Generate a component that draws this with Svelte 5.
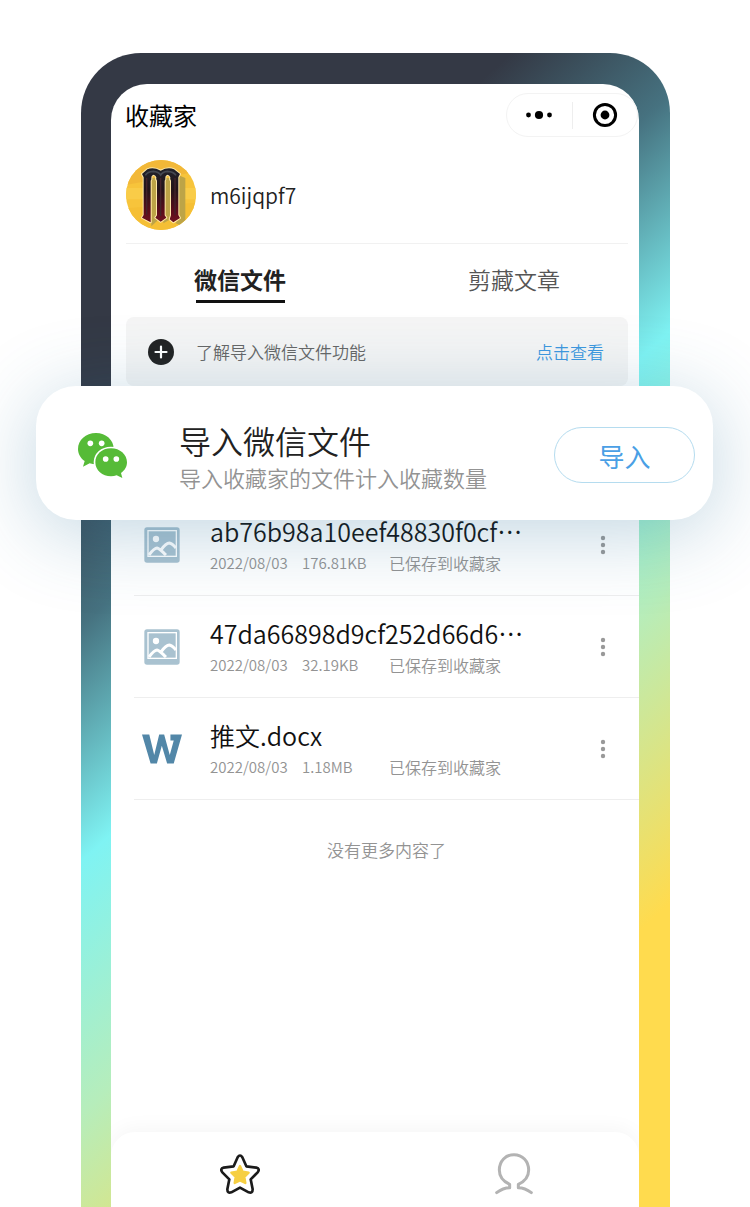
<script>
  let activeTab = $state('files');

  const tabs = [
    { id: 'files', label: '微信文件' },
    { id: 'articles', label: '剪藏文章' }
  ];

  const files = [
    { type: 'image', name: 'ab76b98a10eef48830f0cf…', date: '2022/08/03', size: '176.81KB', status: '已保存到收藏家' },
    { type: 'image', name: '47da66898d9cf252d66d6…', date: '2022/08/03', size: '32.19KB', status: '已保存到收藏家' },
    { type: 'doc', name: '推文.docx', date: '2022/08/03', size: '1.18MB', status: '已保存到收藏家' }
  ];
</script>

<div class="page" lang="zh-CN">
  <div class="phone">
    <main class="screen">
      <header class="header">
        <h1>收藏家</h1>
        <div class="capsule">
          <button aria-label="更多">
            <svg width="26" height="10" viewBox="0 0 26 10">
              <circle cx="2.5" cy="5" r="2.4" />
              <circle cx="13" cy="5" r="4.1" />
              <circle cx="23.5" cy="5" r="2.4" />
            </svg>
          </button>
          <span class="divider"></span>
          <button aria-label="关闭">
            <svg width="26" height="26" viewBox="0 0 26 26">
              <circle cx="13" cy="13" r="10.6" fill="none" stroke="#000" stroke-width="3" />
              <circle cx="13" cy="13" r="4.4" />
            </svg>
          </button>
        </div>
      </header>

      <section class="profile">
        <svg class="avatar" width="70" height="70" viewBox="0 0 210 210" aria-hidden="true">
          <defs>
            <linearGradient id="ink" x1="0" y1="0" x2="0" y2="1">
              <stop offset="0" stop-color="#20222b" />
              <stop offset="0.4" stop-color="#241419" />
              <stop offset="0.8" stop-color="#5c0d1b" />
              <stop offset="1" stop-color="#6e1420" />
            </linearGradient>
            <clipPath id="round"><circle cx="105" cy="105" r="105" /></clipPath>
            <path
              id="emblem"
              d="M48 42L64 28Q82 20 104 32Q126 20 144 28L162 42L157 52V165L162 174L142 187L131 178L135 166V62Q131 60 133 52Q130 44 124 44Q117 46 118 54Q119 59 116 62V166L121 173L104 185L88 173L93 166V62Q89 60 91 52Q88 44 82 44Q75 46 76 54Q77 59 74 62V187L48 173L53 165V52Z"
            />
          </defs>
          <g clip-path="url(#round)">
            <rect width="210" height="210" fill="#f7c43b" />
            <path d="M0 0H210V35L0 75Z" fill="#f2b838" />
            <path d="M0 84H210V118H0Z" fill="#f9cc48" />
            <path d="M0 145L210 128V210H0Z" fill="#f5bf35" />
            <path d="M76 54H94V182L76 199ZM116 54H136V176L112 190ZM158 46L178 54V186L168 199L148 189L158 176Z" fill="#bda447" />
            <use href="#emblem" fill="url(#ink)" stroke="#ffe9a8" stroke-width="6" stroke-linejoin="round" />
            <use href="#emblem" fill="url(#ink)" />
            <path d="M58 46Q64 35 82 34Q98 35 104 45Q110 35 124 34Q143 35 150 46" fill="none" stroke="#454852" stroke-width="5" />
            <path d="M62 54V164M104 54V168M147 54V164" stroke="#43232b" stroke-width="4" />
          </g>
        </svg>
        <span class="username">m6ijqpf7</span>
      </section>

      <div class="tabs" role="tablist">
        {#each tabs as tab}
          <button
            role="tab"
            class="tab"
            class:active={activeTab === tab.id}
            aria-selected={activeTab === tab.id}
            onclick={() => (activeTab = tab.id)}
          >
            {tab.label}
          </button>
        {/each}
      </div>

      <section class="notice">
        <svg width="26" height="26" viewBox="0 0 26 26" aria-hidden="true">
          <circle cx="13" cy="13" r="13" fill="#222" />
          <path d="M13 7.5V18.5M7.5 13H18.5" stroke="#fff" stroke-width="2.2" stroke-linecap="round" />
        </svg>
        <span>了解导入微信文件功能</span>
        <a href="#guide">点击查看</a>
      </section>

      <section class="import-card">
        <svg class="wechat" width="49" height="45" viewBox="0 0 147 135" aria-hidden="true">
          <path
            d="M54 0C23 0 0 21 0 48C0 63 8 76 20 84L15 101L35 91C41 93 48 94 54 94C85 94 107 74 107 47C107 21 84 0 54 0Z"
            fill="#56bb37"
          />
          <path
            d="M99 46C71 46 52 65 52 88C52 112 73 130 99 130C105 130 111 129 116 127L133 135L129 120C140 113 147 101 147 88C147 65 126 46 99 46Z"
            fill="#56bb37"
            stroke="#fff"
            stroke-width="10"
            paint-order="stroke"
          />
          <g fill="#fff">
            <circle cx="37" cy="31" r="8.5" />
            <circle cx="71" cy="31" r="8.5" />
            <circle cx="83" cy="78" r="8.5" />
            <circle cx="115" cy="78" r="8.5" />
          </g>
        </svg>
        <div class="import-text">
          <h2>导入微信文件</h2>
          <p>导入收藏家的文件计入收藏数量</p>
        </div>
        <button class="import-button">导入</button>
      </section>

      <section class="list">
        {#each files as file}
          <article class="file">
            <div class="file-icon">
              {#if file.type === 'image'}
                <svg width="36" height="36" viewBox="0 0 108 108" aria-hidden="true">
                  <rect x="1" y="1" width="106" height="106" rx="8" fill="#a9c2d0" />
                  <rect x="12" y="11" width="85" height="77" fill="none" stroke="#fff" stroke-width="4" />
                  <circle cx="36" cy="36" r="9.5" fill="#fff" />
                  <path d="M15 84C24 72 31 63 39 63C47 64 55 74 66 84M50 70C60 56 68 48 76 48C84 49 90 56 96 63" fill="none" stroke="#fff" stroke-width="9" />
                </svg>
              {:else}
                <svg width="40" height="30" viewBox="0 0 121 88" aria-hidden="true">
                  <path d="M0 0H22L37 62L52 0H67L84 62L96 18H86V0H121L96 88H76L60 34L45 88H26Z" fill="#5287a8" />
                </svg>
              {/if}
            </div>
            <div class="file-info">
              <h3>{file.name}</h3>
              <div class="meta">
                <span>{file.date}</span>
                <span>{file.size}</span>
                <span class="status">{file.status}</span>
              </div>
            </div>
            <button class="more" aria-label="更多操作">
              <svg width="6" height="20" viewBox="0 0 6 20" fill="#999">
                <circle cx="3" cy="3" r="2.2" />
                <circle cx="3" cy="10" r="2.2" />
                <circle cx="3" cy="17" r="2.2" />
              </svg>
            </button>
          </article>
        {/each}
        <p class="end">没有更多内容了</p>
      </section>

      <nav class="navbar">
        <button aria-label="收藏">
          <svg width="40" height="40" viewBox="0 0 120 120">
            <path
              d="M53 10Q60 -1 67 10L79 37L109 41Q121 44 113 55L92 76L98 106Q98 119 86 115L60 101L34 115Q22 119 22 106L28 76L7 55Q-1 44 11 41L41 37Z"
              fill="#fff"
              stroke="#1b1b1b"
              stroke-width="8"
              stroke-linejoin="round"
            />
            <path
              d="M60 36L68 53L86 56L73 69L76 87L60 79L44 87L47 69L34 56L52 53Z"
              fill="#f6cf42"
              stroke="#f6cf42"
              stroke-width="7"
              stroke-linejoin="round"
            />
          </svg>
        </button>
        <button aria-label="我的">
          <svg width="38" height="42" viewBox="0 0 114 126">
            <path
              d="M5 119Q24 104 44 104V94C24 85 13 69 13 51C13 24 32 5 57 5S101 24 101 51C101 69 90 85 70 94V104Q90 104 109 119"
              fill="none"
              stroke="#b3b3b3"
              stroke-width="9"
              stroke-linecap="round"
              stroke-linejoin="round"
            />
          </svg>
        </button>
      </nav>
    </main>
  </div>
</div>

<style>
  :global(body) {
    margin: 0;
    background: #fff;
  }

  .page {
    box-sizing: border-box;
    display: flex;
    min-height: 100vh;
    padding: 53px 80px 0 81px;
    overflow: hidden;
    font-family: "Noto Sans CJK SC", "Noto Sans", sans-serif;
    font-weight: 350;
    color: #222;
  }

  h1, h2, h3, p {
    margin: 0;
    font-weight: inherit;
  }

  button {
    padding: 0;
    border: none;
    background: none;
    font-family: inherit;
    font-weight: inherit;
    cursor: pointer;
  }

  svg {
    display: block;
    flex-shrink: 0;
  }

  .phone {
    flex: 1;
    min-width: 0;
    display: flex;
    padding: 31px 31px 0 30px;
    border-radius: 60px 60px 0 0;
    background: linear-gradient(138deg, #343945 23%, #467280 34%, #7ff3f3 48%, #b6edbb 63%, #ffdb4e 82%);
  }

  .screen {
    flex: 1;
    min-width: 0;
    display: flex;
    flex-direction: column;
    border-radius: 36px 36px 0 0;
    background: #fff;
  }

  .header {
    display: flex;
    align-items: center;
    justify-content: space-between;
    padding: 9px 1px 0 14px;
  }

  .header h1 {
    font-size: 24px;
    line-height: 36px;
    font-weight: 400;
    color: #000;
  }

  .capsule {
    box-sizing: border-box;
    display: flex;
    align-items: center;
    width: 132px;
    height: 44px;
    border: 1px solid #f3f3f3;
    border-radius: 22px;
  }

  .capsule button {
    flex: 1;
    display: flex;
    justify-content: center;
  }

  .divider {
    width: 1px;
    height: 27px;
    background: #eee;
  }

  .profile {
    display: flex;
    align-items: center;
    gap: 14px;
    margin: 0 11px 0 15px;
    padding: 23px 0 13px;
    border-bottom: 1px solid #f1f1f1;
  }

  .username {
    font-size: 21px;
    line-height: 32px;
    color: #222;
  }

  .tabs {
    display: flex;
    justify-content: space-between;
    padding: 16px 79px 14px 83px;
  }

  .tab {
    display: flex;
    flex-direction: column;
    align-items: center;
    gap: 2px;
    font-size: 23px;
    line-height: 38px;
    color: #555;
  }

  .tab::after {
    content: "";
    width: 89px;
    height: 3px;
  }

  .tab.active {
    font-weight: 700;
    color: #222;
  }

  .tab.active::after {
    background: #111;
  }

  .notice {
    display: flex;
    align-items: center;
    gap: 22px;
    height: 69px;
    margin: 0 11px 0 15px;
    padding: 0 24px 0 22px;
    border-radius: 8px;
    background: #f5f5f5;
    font-size: 17px;
    line-height: 26px;
    color: #666;
  }

  .notice a {
    margin-left: auto;
    color: #3d98df;
    text-decoration: none;
  }

  .import-card {
    position: relative;
    z-index: 1;
    display: flex;
    align-items: center;
    gap: 52px;
    box-sizing: border-box;
    min-height: 134px;
    margin: 0 -74px -26px -75px;
    padding: 4px 18px 0 42px;
    border-radius: 40px;
    background: #fff;
    box-shadow: 0 12px 80px rgba(45, 115, 155, 0.3);
  }

  .import-text {
    flex: 1;
    padding-top: 4px;
  }

  .import-text h2 {
    font-size: 32px;
    line-height: 40px;
  }

  .import-text p {
    font-size: 22px;
    line-height: 34px;
    color: #939393;
  }

  .import-button {
    box-sizing: border-box;
    width: 141px;
    height: 56px;
    border: 1px solid #b5dcef;
    border-radius: 28px;
    font-size: 26px;
    font-weight: 400;
    color: #4a9fe5;
  }

  .list {
    margin-left: 23px;
  }

  .file {
    display: flex;
    align-items: center;
    gap: 28px;
    height: 101px;
    padding: 0 33px 0 8px;
    border-bottom: 1px solid #eee;
  }

  .file-icon {
    display: flex;
    justify-content: center;
    width: 40px;
  }

  .file-info {
    flex: 1;
    min-width: 0;
  }

  .file-info h3 {
    font-size: 25px;
    line-height: 36px;
    color: #111;
    white-space: nowrap;
  }

  .meta {
    display: grid;
    grid-template-columns: 92px 87px auto;
    font-size: 15px;
    line-height: 28px;
    color: #939393;
  }

  .meta .status {
    font-size: 16px;
  }

  .end {
    padding: 37px 0;
    font-size: 17px;
    line-height: 26px;
    text-align: center;
    color: #939393;
  }

  .navbar {
    display: flex;
    align-items: center;
    justify-content: space-between;
    height: 75px;
    margin-top: auto;
    padding: 8px 79px 0 83px;
    box-sizing: border-box;
    border-radius: 24px 24px 0 0;
    background: #fff;
    box-shadow: 0 -4px 20px rgba(0, 0, 0, 0.04);
    clip-path: inset(-40px 0 0);
  }

  .navbar button {
    display: flex;
    justify-content: center;
    width: 92px;
  }
</style>
